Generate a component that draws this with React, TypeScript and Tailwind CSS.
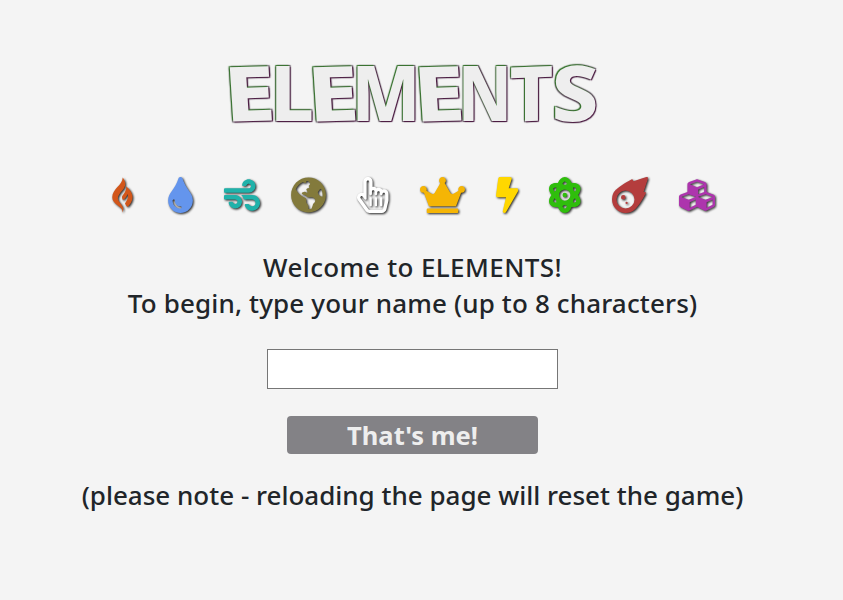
import { FaGripfire, FaTint, FaWind, FaGlobeAmericas, FaRegHandPointer, FaCrown, FaBolt, FaAtom, FaMeteor, FaCubes } from "react-icons/fa";

const icons = [
  { Icon: FaGripfire, cls: "w-[27px] text-[#d2561a]" },
  { Icon: FaTint, cls: "w-[25px] text-[cornflowerblue]" },
  { Icon: FaWind, cls: "w-[36px] text-[lightseagreen]" },
  { Icon: FaGlobeAmericas, cls: "w-[35px] text-[#837a3c]" },
  { Icon: FaRegHandPointer, cls: "w-[31.5px] text-white" },
  { Icon: FaCrown, cls: "w-[45px] text-[#f5b505]" },
  { Icon: FaBolt, cls: "w-[22.5px] text-[gold]" },
  { Icon: FaAtom, cls: "w-[31.5px] text-[#2fbe0c]" },
  { Icon: FaMeteor, cls: "w-[36px] text-[#b43d3d]" },
  { Icon: FaCubes, cls: "w-[36px] text-[#ad35ad]" },
];

const letters = [
  { ch: "E", cls: "w-[45px] -skew-y-2 skew-x-3 scale-x-[1.22]" },
  { ch: "L", cls: "w-[40px] scale-x-[1.02]" },
  { ch: "E", cls: "w-[42px] -skew-y-2 skew-x-3 scale-x-[1.22]" },
  { ch: "M", cls: "w-[64px] scale-x-[0.95]" },
  { ch: "E", cls: "w-[42px] -skew-y-2 skew-x-3 scale-x-[1.22]" },
  { ch: "N", cls: "w-[50px] scale-x-[0.86]" },
  { ch: "T", cls: "w-[43px] -skew-y-2 scale-x-[0.99]" },
  { ch: "S", cls: "w-[44px] scale-x-[1.1]" },
];

export default function App() {
  return (
    <main className="flex h-[600px] w-full flex-col items-center overflow-hidden bg-[#f4f4f4] pr-[18px] pt-[48px] font-['Noto_Sans',sans-serif] text-[26px] font-medium leading-[36px] text-[#212529]">
      <h1 className="mr-[2px] flex h-[92px] items-center justify-center font-['Noto_Sans',sans-serif] text-[76px] font-extrabold leading-[88px] text-[#eee] [text-shadow:-1px_-1px_1px_#35752c,1px_1px_1px_#4a1840,-1px_1px_1px_#665c66,1px_-1px_1px_#665c66,0_0_2px_#99929a]">
        {letters.map((l, i) => (
          <span key={i} className={`flex h-[92px] justify-center ${l.cls}`}>{l.ch}</span>
        ))}
      </h1>
      <div className="mt-[36px] flex h-[37px] items-center gap-[31.05px]">
        {icons.map(({ Icon, cls }, i) => (
          <Icon key={i} className={`h-[36px] shrink-0 drop-shadow-[1px_1px_1px_#222] ${cls}`} />
        ))}
      </div>
      <p className="mt-[36px] whitespace-nowrap tracking-[0.4px]">Welcome to ELEMENTS!</p>
      <p className="whitespace-nowrap tracking-[0.15px]">To begin, type your name (up to 8 characters)</p>
      <input aria-label="Name" maxLength={8} className="mt-[28px] h-[40px] w-[291px] shrink-0 border border-[#767676] bg-white px-2 outline-none" />
      <button className="mt-[27px] h-[38px] w-[251px] shrink-0 rounded-[4px] bg-[#838286] text-[25.5px] font-bold leading-[38px] text-[#eee]">That's me!</button>
      <p className="mt-[23px] whitespace-nowrap">(please note - reloading the page will reset the game)</p>
    </main>
  );
}
